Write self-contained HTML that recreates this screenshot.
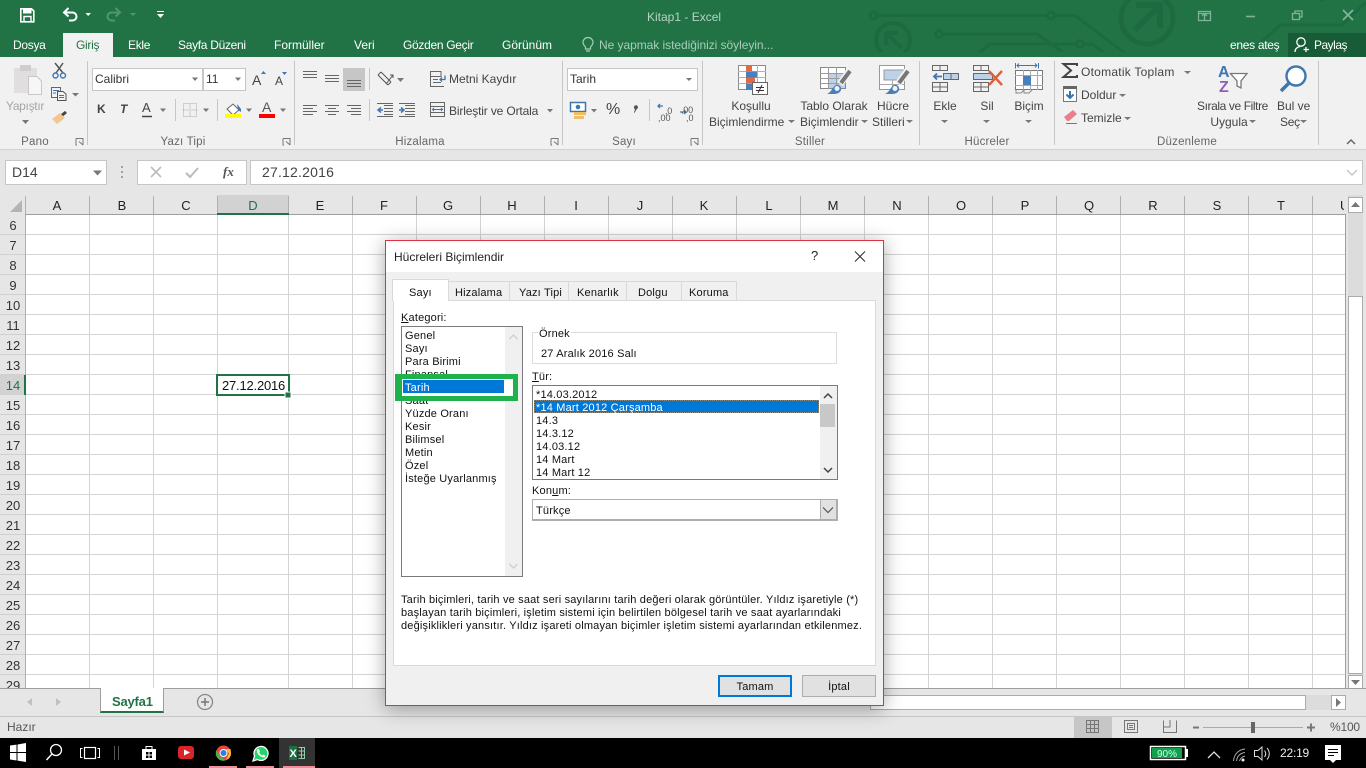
<!DOCTYPE html>
<html lang="tr"><head><meta charset="utf-8"><title>Kitap1 - Excel</title>
<style>
html,body{margin:0;padding:0;width:1366px;height:768px;overflow:hidden;background:#e6e6e6}
body{position:relative;font-family:"Liberation Sans",sans-serif;font-size:12px;color:#444}
div{position:absolute;box-sizing:border-box}
svg{position:absolute;left:0;top:0}
.t{position:absolute;white-space:nowrap;height:16px;line-height:16px}
.c{transform:translateX(-50%)}
.w{color:#fff}
.m{letter-spacing:-.3px}
.g{color:#666;font-size:11.5px;letter-spacing:.2px;margin-top:1px}
.h{color:#222;font-size:13px;margin-top:1px}
.r{color:#333;font-size:13px;margin-top:1px}
.d{color:#111;font-size:11px;letter-spacing:.18px;margin-top:1px}
.tb{background:#f0f0f0;border:1px solid #d9d9d9;border-bottom:0;top:281px;height:19px}
u{text-underline-offset:1px}
</style></head><body>
<!-- bars -->
<div style="left:0;top:0;width:1366px;height:57px;background:#217346"></div>
<svg width="1366" height="57"><defs><clipPath id="cp"><rect width="1366" height="52"/></clipPath></defs>
<g clip-path="url(#cp)" fill="none" stroke="#1d6a41" stroke-width="3">
<circle cx="873.5" cy="15.5" r="3.5"/><path d="M877 15.5H1047"/><circle cx="1051" cy="15.5" r="3.5"/><path d="M1055 15.5H1075L1130 57"/>
<circle cx="939" cy="34" r="3.5"/><path d="M943 34H1037L1065 54"/>
<path d="M977 54L990 44H1076"/><circle cx="1080" cy="44" r="3.5"/><path d="M1084 44H1092L1106 54"/>
<circle cx="893" cy="40" r="17" stroke-width="4"/><path d="M886 33H898M886 33V45M886 33L902 48" stroke-width="4"/>
<circle cx="1147" cy="18" r="26" stroke-width="5"/><path d="M1136 5H1160V28M1160 5L1135 30" stroke-width="6"/>
<path d="M1245 57L1280 25H1342L1366 2M1320 0L1366 -10"/>
</g></svg>
<div style="left:63px;top:33px;width:50px;height:24px;background:#f1f1f1"></div>
<div style="left:1288px;top:33px;width:78px;height:24px;background:#185c37"></div>
<div style="left:0;top:57px;width:1366px;height:93px;background:#f1f1f1;border-bottom:1px solid #d2d2d2"></div>
<div style="left:0;top:150px;width:1366px;height:45px;background:#e6e6e6"></div>
<div style="left:5px;top:160px;width:102px;height:25px;background:#fff;border:1px solid #c6c6c6"></div>
<div style="left:137px;top:160px;width:110px;height:25px;background:#fff;border:1px solid #c6c6c6"></div>
<div style="left:250px;top:160px;width:1113px;height:25px;background:#fff;border:1px solid #c6c6c6"></div>
<div style="left:92px;top:68px;width:111px;height:23px;background:#fff;border:1px solid #c6c6c6"></div>
<div style="left:203px;top:68px;width:43px;height:23px;background:#fff;border:1px solid #c6c6c6"></div>
<div style="left:567px;top:68px;width:131px;height:23px;background:#fff;border:1px solid #c6c6c6"></div>
<div style="left:343px;top:68px;width:22px;height:23px;background:#c6c6c6"></div>
<!-- sheet -->
<div style="left:217px;top:195px;width:72px;height:20px;background:#d2d2d2"></div>
<div style="left:0;top:375px;width:25px;height:20px;background:#d2d2d2"></div>
<div style="left:26px;top:215px;width:1319px;height:473px;background:#fff"></div>
<svg width="1366" height="768" fill="none">
<path stroke="#d4d4d4" d="M89.5 215V688M153.5 215V688M217.5 215V688M288.5 215V688M352.5 215V688M416.5 215V688M480.5 215V688M544.5 215V688M608.5 215V688M672.5 215V688M736.5 215V688M800.5 215V688M864.5 215V688M928.5 215V688M992.5 215V688M1056.5 215V688M1120.5 215V688M1184.5 215V688M1248.5 215V688M1312.5 215V688M26 234.5H1345M26 254.5H1345M26 274.5H1345M26 294.5H1345M26 314.5H1345M26 334.5H1345M26 354.5H1345M26 374.5H1345M26 394.5H1345M26 414.5H1345M26 434.5H1345M26 454.5H1345M26 474.5H1345M26 494.5H1345M26 514.5H1345M26 534.5H1345M26 554.5H1345M26 574.5H1345M26 594.5H1345M26 614.5H1345M26 634.5H1345M26 654.5H1345M26 674.5H1345"/>
<path stroke="#d0d0d0" d="M0 234.5H25M0 254.5H25M0 274.5H25M0 294.5H25M0 314.5H25M0 334.5H25M0 354.5H25M0 374.5H25M0 394.5H25M0 414.5H25M0 434.5H25M0 454.5H25M0 474.5H25M0 494.5H25M0 514.5H25M0 534.5H25M0 554.5H25M0 574.5H25M0 594.5H25M0 614.5H25M0 634.5H25M0 654.5H25M0 674.5H25"/>
<path stroke="#b0b0b0" d="M25.5 196V688M89.5 196V214M153.5 196V214M217.5 196V214M288.5 196V214M352.5 196V214M416.5 196V214M480.5 196V214M544.5 196V214M608.5 196V214M672.5 196V214M736.5 196V214M800.5 196V214M864.5 196V214M928.5 196V214M992.5 196V214M1056.5 196V214M1120.5 196V214M1184.5 196V214M1248.5 196V214M1312.5 196V214"/>
<path stroke="#9e9e9e" d="M25 214.5H1345.5V688"/>
<path fill="#b4b4b4" d="M10 212L22 200V212Z"/>
<path stroke="#217346" stroke-width="2" d="M217 214H289M25 375V395"/>
<rect x="217" y="375" width="72" height="20" stroke="#217346" stroke-width="2"/>
<rect x="285" y="392" width="6" height="6" fill="#217346" stroke="#fff"/>
</svg>
<!-- column headers -->
<span class="t c h" style="left:57px;top:197px">A</span><span class="t c h" style="left:122px;top:197px">B</span><span class="t c h" style="left:186px;top:197px">C</span><span class="t c h" style="left:253px;top:197px;color:#217346">D</span><span class="t c h" style="left:320px;top:197px">E</span><span class="t c h" style="left:384px;top:197px">F</span><span class="t c h" style="left:448px;top:197px">G</span><span class="t c h" style="left:512px;top:197px">H</span><span class="t c h" style="left:576px;top:197px">I</span><span class="t c h" style="left:640px;top:197px">J</span><span class="t c h" style="left:704px;top:197px">K</span><span class="t c h" style="left:769px;top:197px">L</span><span class="t c h" style="left:833px;top:197px">M</span><span class="t c h" style="left:897px;top:197px">N</span><span class="t c h" style="left:961px;top:197px">O</span><span class="t c h" style="left:1025px;top:197px">P</span><span class="t c h" style="left:1089px;top:197px">Q</span><span class="t c h" style="left:1153px;top:197px">R</span><span class="t c h" style="left:1217px;top:197px">S</span><span class="t c h" style="left:1281px;top:197px">T</span><span class="t h" style="left:1340px;top:197px;width:4px;overflow:hidden">U</span>
<!-- row numbers -->
<span class="t c r" style="left:13px;top:217px">6</span><span class="t c r" style="left:13px;top:237px">7</span><span class="t c r" style="left:13px;top:257px">8</span><span class="t c r" style="left:13px;top:277px">9</span><span class="t c r" style="left:13px;top:297px">10</span><span class="t c r" style="left:13px;top:317px">11</span><span class="t c r" style="left:13px;top:337px">12</span><span class="t c r" style="left:13px;top:357px">13</span><span class="t c r" style="left:13px;top:377px;color:#217346">14</span><span class="t c r" style="left:13px;top:397px">15</span><span class="t c r" style="left:13px;top:417px">16</span><span class="t c r" style="left:13px;top:437px">17</span><span class="t c r" style="left:13px;top:457px">18</span><span class="t c r" style="left:13px;top:477px">19</span><span class="t c r" style="left:13px;top:497px">20</span><span class="t c r" style="left:13px;top:517px">21</span><span class="t c r" style="left:13px;top:537px">22</span><span class="t c r" style="left:13px;top:557px">23</span><span class="t c r" style="left:13px;top:577px">24</span><span class="t c r" style="left:13px;top:597px">25</span><span class="t c r" style="left:13px;top:617px">26</span><span class="t c r" style="left:13px;top:637px">27</span><span class="t c r" style="left:13px;top:657px">28</span><span class="t c r" style="left:13px;top:677px">29</span>
<span class="t" style="left:222px;top:378px;font-size:13px;color:#111;letter-spacing:-.2px">27.12.2016</span>
<!-- scrollbars -->
<div style="left:1348px;top:195px;width:15px;height:494px;background:#dcdcdc"></div>
<div style="left:1348px;top:197px;width:15px;height:16px;background:#fff;border:1px solid #ababab"></div>
<div style="left:1348px;top:296px;width:15px;height:378px;background:#fff;border:1px solid #ababab"></div>
<div style="left:1348px;top:675px;width:15px;height:14px;background:#fff;border:1px solid #ababab"></div>
<!-- bottom -->
<div style="left:0;top:688px;width:1366px;height:28px;background:#e6e6e6;border-top:1px solid #9e9e9e"></div>
<div style="left:100px;top:688px;width:64px;height:25px;background:#fff;border:1px solid #9e9e9e;border-top:0;border-bottom:2px solid #217346"></div>
<span class="t" style="left:112px;top:694px;font-size:13px;font-weight:bold;color:#217346;letter-spacing:-.2px">Sayfa1</span>
<div style="left:870px;top:695px;width:461px;height:15px;background:#dcdcdc"></div>
<div style="left:870px;top:695px;width:436px;height:15px;background:#fff;border:1px solid #ababab"></div>
<div style="left:1331px;top:695px;width:15px;height:15px;background:#fff;border:1px solid #ababab"></div>
<div style="left:0;top:716px;width:1366px;height:22px;background:#e6e6e6;border-top:1px solid #c6c6c6"></div>
<div style="left:1074px;top:717px;width:38px;height:21px;background:#c6c6c6"></div>
<span class="t" style="left:7px;top:719px;font-size:12px;color:#555">Hazır</span>
<span class="t" style="left:1330px;top:719px;font-size:12px;color:#555;letter-spacing:-.2px">%100</span>
<div style="left:0;top:738px;width:1366px;height:30px;background:#000"></div>
<div style="left:279px;top:738px;width:36px;height:30px;background:#333"></div>
<div style="left:209px;top:766px;width:28px;height:2px;background:#f08f9c"></div>
<div style="left:246px;top:766px;width:28px;height:2px;background:#f08f9c"></div>
<div style="left:283px;top:766px;width:32px;height:2px;background:#f08f9c"></div>
<!-- icons -->
<svg width="1366" height="768" fill="none">
<!-- QAT -->
<path stroke="#fff" stroke-width="1.6" d="M20.8 8.8H31.5L33.8 11V21.8H20.8Z"/><path fill="#fff" d="M23 8.5H31.5V13.5H23Z"/><path stroke="#fff" stroke-width="1.4" d="M24 21.5V16.5H31V21.5"/>
<path stroke="#fff" stroke-width="2" d="M68.5 8L64 12.5L68.5 16.5M64.5 12.5H72.5A4 4 0 0 1 72.5 20.5H69"/>
<path fill="#fff" d="M85.5 13H91L88.2 16Z"/>
<path stroke="#4f9673" stroke-width="2" d="M115.5 8L120 12.5L115.5 16.5M119.5 12.5H111.5A4 4 0 0 0 111.5 20.5H115"/>
<path fill="#4f9673" d="M130 13H136L133 16Z"/>
<path stroke="#fff" d="M157 11.5H164"/><path fill="#fff" d="M157 14H164L160.5 18Z"/>
<!-- window controls -->
<g stroke="#7fb398" stroke-width="1.3"><rect x="1198.5" y="11.5" width="12" height="9"/><path d="M1204.5 20V14M1202 16L1204.5 13.5L1207 16M1198.5 13.5H1210.5"/>
<path stroke-width="1.6" d="M1246 16.5H1255"/><rect x="1292.5" y="13.5" width="7" height="6"/><path d="M1295 13V11H1302V17H1300"/><path stroke-width="1.8" d="M1343 10L1353 20M1353 10L1343 20"/></g>
<!-- lightbulb -->
<path stroke="#a9ccb8" stroke-width="1.2" d="M585.5 47C583.5 45 583 43.5 583 42.5A5 5 0 0 1 593 42.5C593 43.5 592.5 45 590.5 47V49H585.5ZM586 51H590"/>
<!-- Paylas -->
<circle cx="1301" cy="42" r="4.2" stroke="#fff" stroke-width="1.3"/><path stroke="#fff" stroke-width="1.3" d="M1295 52C1295 49 1297 47 1300 46.5M1306 47V52M1303.5 49.5H1309"/>
<!-- separators -->
<path stroke="#c6c6c6" d="M87.5 61V145M294.5 61V145M562.5 61V145M702.5 61V145M919.5 61V145M1054.5 61V145M1318.5 61V145"/>
<path stroke="#c6c6c6" d="M175.5 99V121M217.5 99V121M369.5 68V90M369.5 99V121M649.5 99V121"/>
<!-- launchers -->
<g stroke="#777"><path d="M76 138.5H83V145M76 138.5V145H77M79 141.5L83 145"/><path d="M283 138.5H290V145M283 138.5V145H284M286 141.5L290 145"/><path d="M551 138.5H558V145M551 138.5V145H552M554 141.5L558 145"/><path d="M691 138.5H698V145M691 138.5V145H692M694 141.5L698 145"/></g>
<path stroke="#666" stroke-width="1.5" d="M1347 144L1351 140L1355 144"/>
<!-- dropdowns -->
<g fill="#777"><path d="M192 77.5H198L195 81ZM235 77.5H241L238 81ZM686 78H692L689 81ZM22 120H29L25.5 124ZM72 93H79L75.5 96.5ZM160 108.5H166L163 112ZM203 108.5H209L206 112ZM246 108.5H252L249 112ZM280 108.5H286L283 112ZM397 78H404L400.5 82ZM547 109H553L550 112.5ZM591 109H597L594 112.5ZM788 120H795L791.5 123ZM861 120H868L864.5 123ZM906 120H913L909.5 123ZM941 120H948L944.5 123ZM983 120H990L986.5 123ZM1025 120H1032L1028.5 123ZM1184 71H1191L1187.5 74ZM1119 94H1126L1122.5 97ZM1124 117H1131L1127.5 120ZM1249 120H1256L1252.5 123ZM1300 120H1307L1303.5 123ZM93 170.5H102L97.5 175.5Z"/></g>
<!-- clipboard -->
<rect x="14" y="68" width="23" height="25" fill="#e0dede"/><rect x="20" y="65" width="11" height="6" fill="#cfcdcd"/><path fill="#f6f6f6" stroke="#c8c8c8" d="M28.5 76.5H37L41.5 81V94.5H28.5Z"/>
<!-- scissors -->
<path stroke="#555" stroke-width="1.5" d="M56 73L63 63M63 73L55 63"/><circle cx="55.5" cy="75.5" r="2.5" stroke="#3f76b0" stroke-width="1.4"/><circle cx="63" cy="75.5" r="2.5" stroke="#3f76b0" stroke-width="1.4"/>
<!-- copy -->
<path stroke="#666" d="M51.5 87.5H60.5V97.5H51.5Z"/><path fill="#f1f1f1" stroke="#555" d="M57.5 91.5H63L66 94V100.5H57.5Z"/><path stroke="#3f76b0" d="M53 90.5H59M53 93H56M59 95.5H64M59 97.5H64"/>
<!-- brush -->
<path stroke="#444" stroke-width="3" d="M66 112L61 116"/><path fill="#f2c68e" d="M52 119L60 113L65 118L57 124Z"/>
<!-- font grow/shrink -->
<path fill="#3f76b0" d="M261 74H266L263.5 71ZM282 72H287L284.5 75Z"/>
<path stroke="#444" stroke-width="1.5" d="M142 116.5H152"/>
<path stroke="#aaa" stroke-dasharray="1 1" d="M183.5 103.5H196.5V116.5H183.5ZM190 103.5V116.5M183.5 110H196.5"/>
<path fill="#fff" stroke="#666" d="M227 109L233 104L239 110L233 115Z"/><path fill="#3f76b0" d="M237 104L241 109V112L238 110Z"/><rect x="225" y="114" width="16" height="4" fill="#ffff00"/><rect x="259" y="114" width="16" height="4" fill="#f00"/>
<!-- align -->
<path stroke="#666" d="M303 71.5H317M303 74.5H317M303 77.5H317M325 75.5H339M325 78.5H339M325 81.5H339M347 80.5H361M347 83.5H361M347 86.5H361"/>
<path stroke="#666" d="M303 105.5H317M303 108.5H313M303 111.5H317M303 114.5H313M325 105.5H339M328 108.5H336M325 111.5H339M328 114.5H336M347 105.5H361M351 108.5H361M347 111.5H361M351 114.5H361"/>
<path stroke="#555" d="M378 75L388 85M381 72L391 82M378 75L381 72M388 85L391 82"/><path stroke="#555" d="M386 84L393 75M390 75H393V78"/>
<path stroke="#666" d="M384 105.5H393M384 108.5H393M384 111.5H393M384 114.5H393M377 103.5H393M377 116.5H393M405 105.5H415M405 108.5H415M405 111.5H415M405 114.5H415M399 103.5H415M399 116.5H415"/><path stroke="#3f76b0" stroke-width="1.5" d="M383 110H378M381 107.5L378 110L381 112.5M399 110H404M401 107.5L404 110L401 112.5"/>
<!-- wrap/merge -->
<path stroke="#666" d="M430.5 71.5H441V76.5H430.5ZM430.5 76.5V86.5H444M433 79.5H438M433 82.5H441"/><path stroke="#3f76b0" stroke-width="1.3" d="M445 75.5V79.5H440M442 77.5L440 79.5L442 81.5"/>
<rect x="430.5" y="102.5" width="14" height="14" stroke="#666"/><path stroke="#666" d="M430.5 106.5H444.5M430.5 112.5H444.5"/><path stroke="#3f76b0" d="M432.5 109.5H442.5M434 108L432.5 109.5L434 111M441 108L442.5 109.5L441 111"/>
<!-- number -->
<rect x="570.5" y="102.5" width="15" height="9" fill="#fff" stroke="#3f76b0" stroke-width="1.5"/><circle cx="578" cy="107" r="2.3" fill="#3f76b0"/><path fill="#eebf62" d="M574 112H586V115H574ZM574 116H584V119H574Z"/>
<path fill="#555" d="M634 107a2 2 0 1 1 2.6 2.2L634.5 113L634 112.5L635 109.3A2 2 0 0 1 634 107Z"/>
<path stroke="#3f76b0" stroke-width="1.3" d="M663 106H658M660 104L658 106L660 108"/><path stroke="#3f76b0" stroke-width="1.3" d="M680 112H686M684 110L686 112L684 114"/>
<!-- conditional formatting -->
<rect x="738.5" y="65.5" width="27" height="24" fill="#fff" stroke="#8a8a8a"/><path stroke="#b0b0b0" d="M746.5 65V90M757.5 65V90M738 71.5H766M738 77.5H766M738 83.5H766"/>
<rect x="746" y="65" width="6" height="6" fill="#df6a47"/><rect x="746" y="71.5" width="11" height="6" fill="#4a7fba"/><rect x="746" y="77.5" width="9" height="6" fill="#df6a47"/><rect x="746" y="84" width="6" height="6" fill="#4a7fba"/>
<rect x="752.5" y="82.5" width="15" height="12" fill="#fff" stroke="#666"/><path stroke="#333" d="M756 87.5H764M756 90.5H764M762 85L758 93"/>
<!-- table format -->
<rect x="820.5" y="67.5" width="25" height="21" fill="#fff" stroke="#888"/><rect x="828" y="73" width="17" height="15" fill="#bdd1e8"/><path stroke="#9b9b9b" d="M820 73.5H846M820 78.5H846M820 83.5H846M828.5 67V89M836.5 67V89"/>
<path stroke="#f1f1f1" stroke-width="7" d="M850 70L840 84"/><path stroke="#777" stroke-width="4" d="M850 71L841 83"/>
<path fill="#4a7fba" d="M827 94C832 92 832 87 836 85C839 84 842 87 841 90C840 93 837 94 834 94Z"/><circle cx="837" cy="88.5" r="2.5" fill="#f1f1f1"/>
<!-- cell styles -->
<rect x="879.5" y="65.5" width="25" height="24" fill="#fff" stroke="#999"/><rect x="884" y="70" width="20" height="10" fill="#bdd1e8" stroke="#999"/><path stroke="#aaa" d="M880 84.5H904M892.5 80V90"/>
<path stroke="#f1f1f1" stroke-width="7" d="M908 70L898 84"/><path stroke="#777" stroke-width="4" d="M908 71L899 83"/>
<path fill="#4a7fba" d="M885 94C890 92 890 87 894 85C897 84 900 87 899 90C898 93 895 94 892 94Z"/><circle cx="895" cy="88.5" r="2.5" fill="#f1f1f1"/>
<!-- insert -->
<g stroke="#666"><path d="M932.5 65.5H947.5V70.5H932.5ZM940 65.5V70.5"/><path d="M932.5 82.5H947.5V91.5H932.5ZM940 82.5V91.5M932.5 87H947.5"/><path fill="#bdd1e8" d="M943.5 73.5H958.5V79.5H943.5Z"/><path d="M951 73.5V79.5"/></g>
<path stroke="#3f76b0" stroke-width="1.8" d="M942 76.5H934M937 73.5L934 76.5L937 79.5"/>
<!-- delete -->
<g stroke="#666"><path d="M973.5 65.5H988.5V70.5H973.5ZM981 65.5V70.5"/><path d="M973.5 82.5H988.5V91.5H973.5ZM981 82.5V91.5M973.5 87H988.5"/><path fill="#bdd1e8" d="M973.5 73.5H992.5V79.5H973.5Z"/></g>
<path stroke="#df6038" stroke-width="2.4" d="M989 71L1002 85M1002 71L989 85"/>
<!-- format -->
<path stroke="#3f76b0" d="M1015.5 63V68.5M1038.5 63V68.5M1017 65.5H1037M1019 63.5L1017 65.5L1019 67.5M1035 63.5L1037 65.5L1035 67.5"/>
<rect x="1015.5" y="70.5" width="27" height="19" fill="#fff" stroke="#777"/><path stroke="#aaa" d="M1023.5 70V90M1030.5 70V90M1037.5 70V90M1015 75.5H1043M1015 85.5H1043"/><rect x="1023" y="76" width="8" height="9" fill="#4a7fba"/>
<path stroke="#888" d="M1016 90V93H1021L1024 90M1024 90V93H1029L1032 90"/>
<!-- sigma -->
<path stroke="#444" stroke-width="2" d="M1077 66V64H1063.5L1071 70.5L1063.5 77H1077V75"/>
<!-- fill -->
<rect x="1063.5" y="86.5" width="13" height="15" fill="#fff" stroke="#777"/><rect x="1063" y="86" width="14" height="3" fill="#666"/><path stroke="#2f74b5" stroke-width="2" d="M1070 91V98M1066.5 94.5L1070 98L1073.5 94.5"/>
<!-- clear -->
<path fill="#e9808f" d="M1064 117L1073 110L1077 114L1069 121H1067Z"/><path stroke="#777" d="M1066 123.5H1077"/>
<!-- sort filter -->
<text x="1218" y="77" font-family="Liberation Sans" font-size="16" font-weight="bold" fill="#3f76b0">A</text>
<text x="1219" y="92" font-family="Liberation Sans" font-size="16" font-weight="bold" fill="#8e5fb8">Z</text>
<path fill="#fff" stroke="#777" stroke-width="1.3" d="M1230.5 73.5H1247L1241 81V88L1237 86V81Z"/>
<!-- find -->
<circle cx="1296" cy="76" r="9.5" fill="#fff" stroke="#3f76b0" stroke-width="2.4"/><path stroke="#3f76b0" stroke-width="3.6" d="M1289 83L1281 91"/>
<!-- formula bar -->
<g fill="#a0a0a0"><rect x="121" y="166" width="2" height="2"/><rect x="121" y="171" width="2" height="2"/><rect x="121" y="176" width="2" height="2"/></g>
<path stroke="#bbb" stroke-width="1.6" d="M151 167L161 177M161 167L151 177"/><path stroke="#bbb" stroke-width="2" d="M186 173L190 177L198 168"/>
<path stroke="#c8c8c8" stroke-width="1.5" d="M1347 170L1352 175L1357 170"/>
<!-- scroll arrows -->
<path fill="#777" d="M1351 207L1355.5 202L1360 207ZM1351 680L1355.5 685L1360 680ZM1336 698L1341 702.5L1336 707Z"/>
<path fill="#c0c0c0" d="M32 698V706L27 702ZM56 698L61 702L56 706Z"/>
<circle cx="205" cy="702" r="7.5" stroke="#888" stroke-width="1.3"/><path stroke="#777" stroke-width="1.5" d="M201 702H209M205 698V706"/>
<!-- status -->
<g stroke="#777"><rect x="1086.5" y="720.5" width="12" height="12"/><path d="M1090.5 720V733M1094.5 720V733M1086 724.5H1099M1086 728.5H1099"/><rect x="1124.5" y="720.5" width="13" height="12"/><rect x="1127.5" y="723.5" width="7" height="6"/><path d="M1129 725.5H1133M1129 727.5H1133"/><path d="M1163.5 720.5V732.5H1176.5V720.5M1170 720V727H1163.5"/></g>
<path stroke="#777" stroke-width="2" d="M1193 727.5H1199M1307 727.5H1315M1311 723.5V731.5"/><path stroke="#aaa" d="M1203 727.5H1303"/><rect x="1251" y="722" width="4" height="11" fill="#666"/>
<!-- taskbar -->
<path fill="#fff" d="M10 745.5L16.5 744.6V752H10ZM17.5 744.5L26 743V752H17.5ZM10 753H16.5V760.5L10 759.5ZM17.5 753H26V762L17.5 760.6Z"/>
<circle cx="56" cy="750" r="5.5" stroke="#fff" stroke-width="1.3"/><path stroke="#fff" stroke-width="1.5" d="M52 754L46.5 760"/>
<rect x="84.5" y="747.5" width="11" height="11" stroke="#fff" stroke-width="1.2"/><path stroke="#fff" d="M82.5 748.5H80.5V757.5H82.5M97.5 748.5H99.5V757.5H97.5"/>
<path stroke="#555" d="M114.5 746V760M118.5 746V760"/>
<path fill="#fff" d="M142 749H156V760H142Z"/><path stroke="#fff" d="M146 749V746.5H152V749"/><path fill="#000" d="M146 752H148.5V754.5H146ZM149.5 752H152V754.5H149.5ZM146 755.5H148.5V758H146ZM149.5 755.5H152V758H149.5Z"/>
<rect x="178" y="746" width="16" height="13" rx="3" fill="#d9252a"/><path fill="#fff" d="M184 749.5L190 752.5L184 755.5Z"/>
<circle cx="223.5" cy="753" r="7.5" fill="#e8453c"/><path fill="#4caf50" d="M216.5 750L220 756.5L226 760.3A7.5 7.5 0 0 1 216.5 750Z"/><path fill="#fbc02d" d="M231 753A7.5 7.5 0 0 1 226 760.3L229 753.5L226 749H230.5Z"/><circle cx="223.5" cy="753" r="3.5" fill="#2a7de1" stroke="#fff" stroke-width="1"/>
<path fill="#25d366" stroke="#fff" stroke-width="1.3" d="M253 761L254.5 756A7 7 0 1 1 257.5 759.5Z"/><path fill="#fff" d="M257 749.5L259 749L260 751.5L259.2 752.5C260 754 261 755 262.5 755.5L263.5 754.5L265.5 755.8L265 757.3C261 758.3 256 753.5 257 749.5Z"/>
<path fill="#1d6f42" d="M289 746H297V760H289Z"/><path stroke="#8fd0a8" d="M298.5 747.5H304.5V758.5H298.5M301.5 747.5V758.5M298.5 751H304.5M298.5 755H304.5"/>
<text x="289.5" y="757" font-family="Liberation Sans" font-size="11" font-weight="bold" fill="#fff">X</text>
<rect x="1150.5" y="746.5" width="35" height="13" stroke="#fff" stroke-width="1.5"/><rect x="1186" y="749" width="2" height="8" fill="#fff"/><rect x="1152" y="748" width="30" height="10" fill="#12a14b"/>
<text x="1157" y="757" font-family="Liberation Sans" font-size="10" fill="#cfe">90%</text>
<path stroke="#ddd" stroke-width="1.3" d="M1208 758L1214 752L1220 758"/>
<path stroke="#aaa" d="M1233.5 761C1234 754 1239 749.5 1245 749M1236.5 761C1237 756.5 1240 753 1245 752.5M1239.5 761C1240 759 1242 756.5 1245 756"/><circle cx="1243" cy="760" r="1.5" fill="#eee"/>
<path stroke="#ddd" d="M1254.5 750.5H1258L1262 747V760L1258 756.5H1254.5ZM1264.5 750.5C1266 752.5 1266 755 1264.5 757M1267 748C1270 751.5 1270 756 1267 759.5"/>
<path fill="#fff" d="M1325 745H1341V760H1336L1333 763L1330 760H1325Z"/><path stroke="#000" d="M1328 749.5H1338M1328 752.5H1338M1328 755.5H1334"/>
</svg>
<!-- tabs text -->
<span class="t w m" style="left:13px;top:37px">Dosya</span>
<span class="t m" style="left:76px;top:37px;color:#217346">Giriş</span>
<span class="t w m" style="left:128px;top:37px">Ekle</span>
<span class="t w m" style="left:178px;top:37px">Sayfa Düzeni</span>
<span class="t w" style="left:274px;top:37px">Formüller</span>
<span class="t w" style="left:354px;top:37px">Veri</span>
<span class="t w m" style="left:403px;top:37px">Gözden Geçir</span>
<span class="t w" style="left:502px;top:37px">Görünüm</span>
<span class="t" style="left:599px;top:37px;color:#a9ccb8;letter-spacing:-.05px">Ne yapmak istediğinizi söyleyin...</span>
<span class="t" style="left:647px;top:9px;color:#b7d4c4">Kitap1 - Excel</span>
<span class="t w m" style="left:1230px;top:37px">enes ateş</span>
<span class="t w" style="left:1314px;top:37px;letter-spacing:-.5px">Paylaş</span>
<!-- ribbon text -->
<span class="t m" style="left:6px;top:98px;color:#a6a6a6">Yapıştır</span>
<span class="t" style="left:95px;top:71px;color:#333">Calibri</span>
<span class="t" style="left:206px;top:71px;color:#333">11</span>
<span class="t" style="left:252px;top:72px;font-size:14px">A</span><span class="t" style="left:275px;top:73px;font-size:12px">A</span>
<span class="t" style="left:97px;top:101px;font-weight:bold">K</span><span class="t" style="left:120px;top:101px;font-weight:bold;font-style:italic">T</span><span class="t" style="left:142px;top:100px;font-size:13px">A</span>
<span class="t" style="left:262px;top:99px;font-size:14px;color:#555">A</span>
<span class="t" style="left:449px;top:71px">Metni Kaydır</span>
<span class="t" style="left:449px;top:103px;letter-spacing:-.15px">Birleştir ve Ortala</span>
<span class="t" style="left:570px;top:71px;color:#333">Tarih</span>
<span class="t" style="left:606px;top:102px;font-size:16px">%</span>
<span class="t" style="left:658px;top:103px;font-size:9px;color:#555;letter-spacing:-.2px"><span style="margin-left:7px">,0</span></span>
<span class="t" style="left:658px;top:110px;font-size:9px;color:#555">,00</span>
<span class="t" style="left:681px;top:102px;font-size:9px;color:#555;letter-spacing:-.2px">,00</span>
<span class="t" style="left:686px;top:110px;font-size:9px;color:#555">,0</span>
<span class="t c" style="left:751px;top:98px">Koşullu</span>
<span class="t" style="left:709px;top:114px">Biçimlendirme</span>
<span class="t c" style="left:834px;top:98px">Tablo Olarak</span>
<span class="t" style="left:800px;top:114px">Biçimlendir</span>
<span class="t" style="left:877px;top:98px">Hücre</span>
<span class="t" style="left:872px;top:114px">Stilleri</span>
<span class="t c" style="left:945px;top:98px">Ekle</span>
<span class="t c" style="left:987px;top:98px">Sil</span>
<span class="t c" style="left:1029px;top:98px">Biçim</span>
<span class="t" style="left:1081px;top:64px;letter-spacing:.25px">Otomatik Toplam</span>
<span class="t" style="left:1081px;top:87px">Doldur</span>
<span class="t" style="left:1081px;top:110px">Temizle</span>
<span class="t" style="left:1197px;top:98px;letter-spacing:-.4px">Sırala ve Filtre</span>
<span class="t c" style="left:1229px;top:114px">Uygula</span>
<span class="t" style="left:1277px;top:98px">Bul ve</span>
<span class="t m" style="left:1280px;top:114px">Seç</span>
<span class="t c g" style="left:35px;top:133px">Pano</span>
<span class="t c g" style="left:183px;top:133px">Yazı Tipi</span>
<span class="t c g" style="left:420px;top:133px">Hizalama</span>
<span class="t c g" style="left:624px;top:133px">Sayı</span>
<span class="t c g" style="left:810px;top:133px">Stiller</span>
<span class="t c g" style="left:987px;top:133px">Hücreler</span>
<span class="t c g" style="left:1187px;top:133px">Düzenleme</span>
<!-- formula text -->
<span class="t" style="left:12px;top:164px;font-size:14px">D14</span>
<span class="t" style="left:223px;top:164px;font-size:13px;font-family:'Liberation Serif',serif;font-style:italic;font-weight:bold;color:#555">fx</span>
<span class="t" style="left:262px;top:164px;font-size:14px;color:#444;letter-spacing:.2px">27.12.2016</span>
<span class="t" style="left:1280px;top:745px;font-size:12px;color:#eee;letter-spacing:-.2px">22:19</span>
<!-- dialog -->
<div style="left:385px;top:240px;width:499px;height:466px;background:#f0f0f0;border:1px solid #e0303f;box-shadow:0 3px 18px rgba(0,0,0,.35)">
<div style="left:0;top:0;width:497px;height:31px;background:#fff"></div></div>
<span class="t" style="left:394px;top:249px;color:#222;font-size:12px">Hücreleri Biçimlendir</span>
<span class="t" style="left:811px;top:248px;color:#222;font-size:13px">?</span>
<svg width="1366" height="768" style="pointer-events:none"><path stroke="#333" stroke-width="1.1" fill="none" d="M855 251.5L865 261.5M865 251.5L855 261.5"/></svg>
<div class="tb" style="left:448px;width:62px"></div>
<div class="tb" style="left:509px;width:60px"></div>
<div class="tb" style="left:568px;width:59px"></div>
<div class="tb" style="left:626px;width:56px"></div>
<div class="tb" style="left:681px;width:56px"></div>
<div style="left:393px;top:300px;width:483px;height:366px;background:#fff;border:1px solid #d9d9d9"></div>
<div style="left:392px;top:279px;width:57px;height:22px;background:#fff;border:1px solid #d9d9d9;border-bottom:0"></div>
<span class="t d" style="left:409px;top:284px">Sayı</span>
<span class="t d" style="left:455px;top:284px">Hizalama</span>
<span class="t d" style="left:519px;top:284px">Yazı Tipi</span>
<span class="t d" style="left:577px;top:284px">Kenarlık</span>
<span class="t d" style="left:638px;top:284px">Dolgu</span>
<span class="t d" style="left:689px;top:284px">Koruma</span>
<span class="t d" style="left:401px;top:309px"><u>K</u>ategori:</span>
<div style="left:401px;top:326px;width:122px;height:251px;background:#fff;border:1px solid #7a7a7a"></div>
<div style="left:505px;top:327px;width:17px;height:249px;background:#f0f0f0"></div>
<svg width="1366" height="768" fill="none" style="pointer-events:none"><path stroke="#d0d0d0" stroke-width="1.5" d="M509.5 339L513.5 335L517.5 339M509.5 564L513.5 568L517.5 564"/></svg>
<span class="t d" style="left:405px;top:327px">Genel</span>
<span class="t d" style="left:405px;top:340px">Sayı</span>
<span class="t d" style="left:405px;top:353px">Para Birimi</span>
<span class="t d" style="left:405px;top:366px">Finansal</span>
<span class="t d" style="left:405px;top:392px">Saat</span>
<span class="t d" style="left:405px;top:405px">Yüzde Oranı</span>
<span class="t d" style="left:405px;top:418px">Kesir</span>
<span class="t d" style="left:405px;top:431px">Bilimsel</span>
<span class="t d" style="left:405px;top:444px">Metin</span>
<span class="t d" style="left:405px;top:457px">Özel</span>
<span class="t d" style="left:405px;top:470px">İsteğe Uyarlanmış</span>
<div style="left:395px;top:374px;width:123px;height:27px;background:#fff;border:solid #1fb14c;border-width:5px 5px 5px 7px"></div>
<div style="left:403px;top:380px;width:101px;height:13px;background:#0078d7"></div>
<span class="t d" style="left:405px;top:379px;color:#fff">Tarih</span>
<div style="left:532px;top:332px;width:305px;height:32px;border:1px solid #dcdcdc"></div>
<span class="t d" style="left:538px;top:325px;background:#fff;padding:0 1px">Örnek</span>
<span class="t d" style="left:541px;top:345px">27 Aralık 2016 Salı</span>
<span class="t d" style="left:532px;top:368px"><u>T</u>ür:</span>
<div style="left:532px;top:385px;width:306px;height:95px;background:#fff;border:1px solid #7a7a7a"></div>
<div style="left:820px;top:386px;width:17px;height:93px;background:#f0f0f0"></div>
<div style="left:820px;top:404px;width:15px;height:23px;background:#c8c8c8"></div>
<svg width="1366" height="768" fill="none" style="pointer-events:none"><path stroke="#444" stroke-width="1.5" d="M824 398L828 394L832 398M824 468L828 472L832 468"/></svg>
<span class="t d" style="left:536px;top:386px">*14.03.2012</span>
<div style="left:534px;top:400px;width:285px;height:13px;background:#0078d7;border:1px dotted #8f8a78"></div>
<span class="t d" style="left:536px;top:399px;color:#fff">*14 Mart 2012 Çarşamba</span>
<span class="t d" style="left:536px;top:412px">14.3</span>
<span class="t d" style="left:536px;top:425px">14.3.12</span>
<span class="t d" style="left:536px;top:438px">14.03.12</span>
<span class="t d" style="left:536px;top:451px">14 Mart</span>
<span class="t d" style="left:536px;top:464px">14 Mart 12</span>
<span class="t d" style="left:532px;top:482px">Kon<u>u</u>m:</span>
<div style="left:532px;top:499px;width:306px;height:22px;background:#fff;border:1px solid #adadad;border-width:1px 2px 2px 1px"></div>
<div style="left:820px;top:500px;width:16px;height:19px;background:#e1e1e1;border-left:1px solid #adadad"></div>
<svg width="1366" height="768" fill="none" style="pointer-events:none"><path stroke="#555" stroke-width="1.2" d="M823 507.5L828 512.5L833 507.5"/></svg>
<span class="t d" style="left:536px;top:502px">Türkçe</span>
<span class="t d" style="left:401px;top:591px">Tarih biçimleri, tarih ve saat seri sayılarını tarih değeri olarak görüntüler. Yıldız işaretiyle (*)</span>
<span class="t d" style="left:401px;top:604px">başlayan tarih biçimleri, işletim sistemi için belirtilen bölgesel tarih ve saat ayarlarındaki</span>
<span class="t d" style="left:401px;top:617px">değişiklikleri yansıtır. Yıldız işareti olmayan biçimler işletim sistemi ayarlarından etkilenmez.</span>
<div style="left:718px;top:675px;width:74px;height:22px;background:#e1e1e1;border:2px solid #0078d7"></div>
<div style="left:802px;top:675px;width:74px;height:22px;background:#e1e1e1;border:1px solid #adadad"></div>
<span class="t d c" style="left:755px;top:678px">Tamam</span>
<span class="t d c" style="left:839px;top:678px">İptal</span>
</body></html>
